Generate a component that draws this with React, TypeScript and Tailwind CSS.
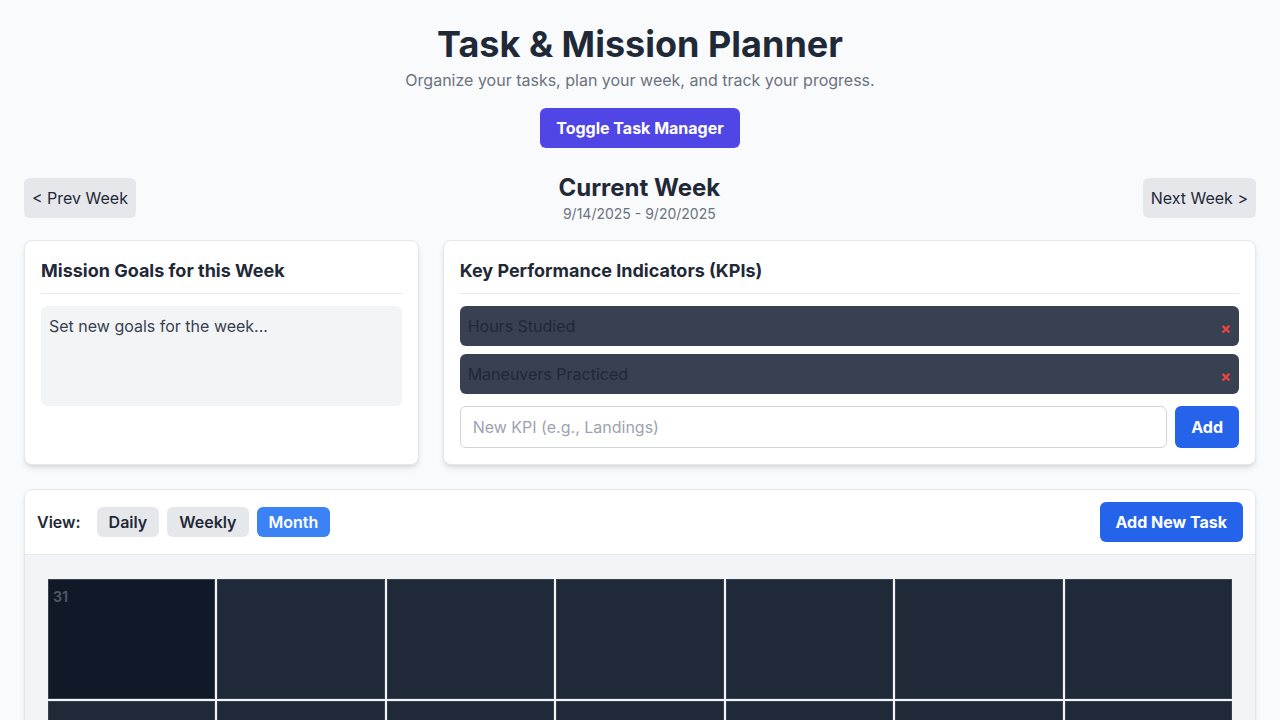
import { useState } from 'react'

type View = 'daily' | 'weekly' | 'month'

const KPIS_INICIAIS = ['Hours Studied', 'Maneuvers Practiced']

export default function App() {
  const [view, setView] = useState<View>('month')
  const [kpis, setKpis] = useState<string[]>(KPIS_INICIAIS)
  const [novoKpi, setNovoKpi] = useState('')

  function adicionarKpi() {
    if (!novoKpi.trim()) return
    setKpis([...kpis, novoKpi.trim()])
    setNovoKpi('')
  }

  // Sept 2025 grid: starts on Sunday Aug 31
  const cells = Array.from({ length: 35 }, (_, i) => i)

  return (
    <div className="min-h-screen bg-[#f9fafb] p-6 text-[#1f2937]" style={{ fontFamily: 'Inter, "Noto Sans", sans-serif' }}>
      {/* Header */}
      <div className="text-center">
        <h1 className="text-4xl font-bold text-[#1f2937]">Task &amp; Mission Planner</h1>
        <p className="mt-1 text-base text-[#6b7280]">Organize your tasks, plan your week, and track your progress.</p>
        <button className="mt-4 rounded-md bg-[#4f46e5] px-4 py-2 font-bold text-white">Toggle Task Manager</button>
      </div>

      {/* Week navigation */}
      <div className="mt-6 mb-4 flex items-center justify-between">
        <button className="rounded-md bg-[#e5e7eb] px-2 py-2 text-base text-[#1f2937]">&lt; Prev Week</button>
        <div className="text-center">
          <h2 className="text-2xl font-bold text-[#1f2937]">Current Week</h2>
          <p className="text-sm text-[#6b7280]">9/14/2025 - 9/20/2025</p>
        </div>
        <button className="rounded-md bg-[#e5e7eb] px-2 py-2 text-base text-[#1f2937]">Next Week &gt;</button>
      </div>

      {/* Goals + KPIs */}
      <div className="grid grid-cols-3 gap-6">
        <div className="rounded-lg border border-[#e5e7eb] bg-white p-4 shadow-md">
          <h3 className="mb-3 border-b border-[#e5e7eb] pb-2 text-lg font-bold text-[#1f2937]">Mission Goals for this Week</h3>
          <textarea
            className="block h-[100px] w-full resize-none rounded-md bg-[#f3f4f6] p-2 text-base text-[#1f2937] outline-none placeholder:text-[#374151]"
            placeholder="Set new goals for the week..."
          />
        </div>

        <div className="col-span-2 rounded-lg border border-[#e5e7eb] bg-white p-4 shadow-md">
          <h3 className="mb-3 border-b border-[#e5e7eb] pb-2 text-lg font-bold text-[#1f2937]">Key Performance Indicators (KPIs)</h3>
          <div className="flex flex-col gap-2">
            {kpis.map((k, i) => (
              <div key={i} className="flex items-center justify-between rounded-md bg-[#374151] px-2 py-2">
                <span className="text-base text-[#1f2937]">{k}</span>
                <button
                  onClick={() => setKpis(kpis.filter((_, j) => j !== i))}
                  className="pt-1 text-base font-bold leading-5 text-[#ef4444]"
                >
                  ×
                </button>
              </div>
            ))}
          </div>
          <div className="mt-3 flex gap-2">
            <input
              value={novoKpi}
              onChange={(e) => setNovoKpi(e.target.value)}
              placeholder="New KPI (e.g., Landings)"
              className="flex-1 rounded-md border border-[#d1d5db] px-3 py-2 text-base outline-none placeholder:text-[#9ca3af]"
            />
            <button onClick={adicionarKpi} className="rounded-md bg-[#2563eb] px-4 font-bold text-white">Add</button>
          </div>
        </div>
      </div>

      {/* Calendar */}
      <div className="mt-6 overflow-hidden rounded-lg border border-[#e5e7eb] bg-white shadow-md">
        <div className="flex items-center justify-between border-b border-[#e5e7eb] p-3">
          <div className="flex items-center gap-2">
            <span className="mr-2 font-semibold text-[#1f2937]">View:</span>
            {(['daily', 'weekly', 'month'] as View[]).map((v) => (
              <button
                key={v}
                onClick={() => setView(v)}
                className={`rounded-md px-3 py-[3px] font-semibold ${
                  view === v ? 'bg-[#3b82f6] text-white' : 'bg-[#e5e7eb] text-[#1f2937]'
                }`}
              >
                {v === 'daily' ? 'Daily' : v === 'weekly' ? 'Weekly' : 'Month'}
              </button>
            ))}
          </div>
          <button className="rounded-md bg-[#2563eb] px-4 py-2 font-bold text-white">Add New Task</button>
        </div>

        <div className="bg-[#f3f4f6] px-[23px] py-6">
          <div className="grid grid-cols-7 gap-0.5">
            {cells.map((i) => (
              <div
                key={i}
                className={`h-[120px] border border-[#374151] p-1 ${i === 0 ? 'bg-[#111827]' : 'bg-[#1f2937]'}`}
              >
                {i === 0 && <span className="text-sm font-bold text-[#4b5563]">31</span>}
              </div>
            ))}
          </div>
        </div>
      </div>
    </div>
  )
}
